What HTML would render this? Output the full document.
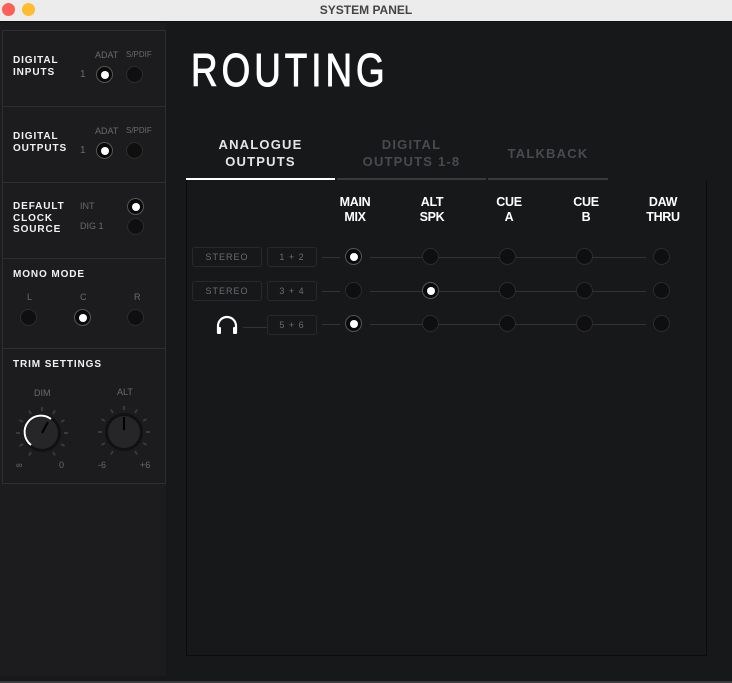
<!DOCTYPE html>
<html><head><meta charset="utf-8">
<style>
*{margin:0;padding:0;box-sizing:border-box}
body{width:732px;height:683px;overflow:hidden;background:#17181a;font-family:"Liberation Sans",sans-serif;position:relative}
.a{position:absolute}
.tb{left:0;top:0;width:732px;height:22px;background:#ececec;border-bottom:1px solid #111}
.tb .t{position:absolute;left:0;right:0;top:3px;text-align:center;font:bold 12px "Liberation Sans",sans-serif;color:#444}
.dot{position:absolute;top:3px;width:13px;height:13px;border-radius:50%}
.side{left:0;top:23px;width:166px;height:653px;background:#1c1c1e}
.box{position:absolute;left:2px;width:164px;border:1px solid #2e2e31;background:#1c1c1e}
.h{position:absolute;color:#f2f2f2;font-weight:bold;font-size:10px;letter-spacing:0.9px;line-height:12px}
.l{position:absolute;color:#6a6a6e;font-size:9px}
.rb{position:absolute;width:17px;height:17px;border-radius:50%;background:#0f0f10;border:1px solid #2c2c2f}
.rb.on::after{content:"";position:absolute;left:3.5px;top:3.5px;width:8px;height:8px;border-radius:50%;background:#fff}
.rb.on{background:#0a0a0b;border-color:#555}
.tab{position:absolute;text-align:center;font-size:13px;letter-spacing:1.2px;line-height:17px;font-weight:bold}
.col{position:absolute;width:60px;text-align:center;color:#fff;font-size:12.5px;font-weight:bold;line-height:15px;letter-spacing:-0.3px}
.pill{position:absolute;height:20px;border:1px solid #29292c;border-radius:3px;color:#6c6c70;font-size:9px;letter-spacing:1px;text-align:center;line-height:18px}
.ln{position:absolute;height:1px;background:#333336}
</style></head><body>
<div class="a tb"><div class="dot" style="left:2px;background:#fe5f57"></div><div class="dot" style="left:22px;background:#febc2e"></div><div class="t">SYSTEM PANEL</div></div>
<div class="a side"></div>
<div class="box" style="top:30px;height:77px"></div>
<div class="box" style="top:106px;height:77px"></div>
<div class="box" style="top:182px;height:77px"></div>
<div class="box" style="top:258px;height:91px"></div>
<div class="box" style="top:348px;height:136px"></div>

<div class="h" style="left:13px;top:55px">DIGITAL<br>INPUTS</div>
<div class="l" style="left:95px;top:50px">ADAT</div><div class="l" style="left:126px;top:50px;font-size:8px">S/PDIF</div>
<div class="l" style="left:80px;top:69px;font-size:10px">1</div>
<div class="rb on" style="left:96px;top:66px"></div><div class="rb" style="left:126px;top:66px"></div>

<div class="h" style="left:13px;top:131px">DIGITAL<br>OUTPUTS</div>
<div class="l" style="left:95px;top:126px">ADAT</div><div class="l" style="left:126px;top:126px;font-size:8px">S/PDIF</div>
<div class="l" style="left:80px;top:145px;font-size:10px">1</div>
<div class="rb on" style="left:96px;top:142px"></div><div class="rb" style="left:126px;top:142px"></div>

<div class="h" style="left:13px;top:201px;line-height:11.5px">DEFAULT<br>CLOCK<br>SOURCE</div>
<div class="l" style="left:80px;top:201px">INT</div><div class="l" style="left:80px;top:221px">DIG 1</div>
<div class="rb on" style="left:127px;top:198px"></div><div class="rb" style="left:127px;top:218px"></div>

<div class="h" style="left:13px;top:269px">MONO MODE</div>
<div class="l" style="left:27px;top:292px">L</div><div class="l" style="left:80px;top:292px">C</div><div class="l" style="left:134px;top:292px">R</div>
<div class="rb" style="left:20px;top:309px"></div><div class="rb on" style="left:74px;top:309px"></div><div class="rb" style="left:127px;top:309px"></div>

<div class="h" style="left:13px;top:359px">TRIM SETTINGS</div>
<div class="l" style="left:34px;top:388px">DIM</div><div class="l" style="left:117px;top:387px">ALT</div>
<svg class="a" style="left:0;top:400px" width="166" height="75">
<g stroke="#3a3a3d" stroke-width="2">
<g transform="translate(42,33)">
<line x1="0" y1="-26" x2="0" y2="-22" transform="rotate(-150)"/><line x1="0" y1="-26" x2="0" y2="-22" transform="rotate(-120)"/><line x1="0" y1="-26" x2="0" y2="-22" transform="rotate(-90)"/><line x1="0" y1="-26" x2="0" y2="-22" transform="rotate(-60)"/><line x1="0" y1="-26" x2="0" y2="-22" transform="rotate(-30)"/><line x1="0" y1="-26" x2="0" y2="-22"/><line x1="0" y1="-26" x2="0" y2="-22" transform="rotate(30)"/><line x1="0" y1="-26" x2="0" y2="-22" transform="rotate(60)"/><line x1="0" y1="-26" x2="0" y2="-22" transform="rotate(90)"/><line x1="0" y1="-26" x2="0" y2="-22" transform="rotate(120)"/><line x1="0" y1="-26" x2="0" y2="-22" transform="rotate(150)"/>
</g>
<g transform="translate(124,32)">
<line x1="0" y1="-26" x2="0" y2="-22" transform="rotate(-150)"/><line x1="0" y1="-26" x2="0" y2="-22" transform="rotate(-120)"/><line x1="0" y1="-26" x2="0" y2="-22" transform="rotate(-90)"/><line x1="0" y1="-26" x2="0" y2="-22" transform="rotate(-60)"/><line x1="0" y1="-26" x2="0" y2="-22" transform="rotate(-30)"/><line x1="0" y1="-26" x2="0" y2="-22"/><line x1="0" y1="-26" x2="0" y2="-22" transform="rotate(30)"/><line x1="0" y1="-26" x2="0" y2="-22" transform="rotate(60)"/><line x1="0" y1="-26" x2="0" y2="-22" transform="rotate(90)"/><line x1="0" y1="-26" x2="0" y2="-22" transform="rotate(120)"/><line x1="0" y1="-26" x2="0" y2="-22" transform="rotate(150)"/>
</g></g>
<circle cx="42" cy="33" r="19" fill="#111112"/><circle cx="42" cy="33" r="16" fill="#262628"/>
<path d="M31,45 A16,16 0 0 1 51,19" fill="none" stroke="#fff" stroke-width="2"/>
<line x1="42" y1="33" x2="48" y2="22" stroke="#000" stroke-width="2"/>
<circle cx="124" cy="32" r="19" fill="#111112"/><circle cx="124" cy="32" r="16" fill="#262628"/>
<line x1="124" y1="30" x2="124" y2="17" stroke="#000" stroke-width="2"/>
</svg>
<div class="l" style="left:16px;top:460px">∞</div><div class="l" style="left:59px;top:460px">0</div>
<div class="l" style="left:98px;top:460px">-6</div><div class="l" style="left:140px;top:460px">+6</div>

<div class="a" style="left:191px;top:40px;color:#fff;font-size:46px;letter-spacing:5px;line-height:60px;transform:scaleX(0.8);transform-origin:0 0;-webkit-text-stroke:1px #fff">ROUTING</div>

<div class="tab" style="left:186px;top:136px;width:149px;color:#e6e6e6">ANALOGUE<br>OUTPUTS</div>
<div class="tab" style="left:337px;top:136px;width:149px;color:#4a4a4e">DIGITAL<br>OUTPUTS 1-8</div>
<div class="tab" style="left:488px;top:145px;width:120px;color:#4a4a4e">TALKBACK</div>
<div class="a" style="left:186px;top:178px;width:149px;height:2px;background:#fff"></div>
<div class="a" style="left:337px;top:178px;width:149px;height:2px;background:#3a3a3d"></div>
<div class="a" style="left:488px;top:178px;width:120px;height:2px;background:#3a3a3d"></div>
<div class="a" style="left:186px;top:180px;width:521px;height:476px;border:1px solid #0c0c0d;border-top:none"></div>

<div class="col" style="left:325px;top:195px">MAIN<br>MIX</div>
<div class="col" style="left:402px;top:195px">ALT<br>SPK</div>
<div class="col" style="left:479px;top:195px">CUE<br>A</div>
<div class="col" style="left:556px;top:195px">CUE<br>B</div>
<div class="col" style="left:633px;top:195px">DAW<br>THRU</div>

<div class="pill" style="left:192px;top:247px;width:70px">STEREO</div>
<div class="pill" style="left:267px;top:247px;width:50px">1 + 2</div>
<div class="pill" style="left:192px;top:281px;width:70px">STEREO</div>
<div class="pill" style="left:267px;top:281px;width:50px">3 + 4</div>
<div class="pill" style="left:267px;top:315px;width:50px">5 + 6</div>
<svg class="a" style="left:215px;top:315px" width="24" height="20"><path d="M3,18 V11 A9,9 0 0 1 21,11 V18" fill="none" stroke="#fff" stroke-width="2.2"/><rect x="2" y="12" width="4" height="7" rx="1" fill="#fff"/><rect x="18" y="12" width="4" height="7" rx="1" fill="#fff"/></svg>
<div class="ln" style="left:243px;top:327px;width:24px"></div>

<div class="ln" style="left:322px;top:257px;width:18px"></div>
<div class="ln" style="left:322px;top:291px;width:18px"></div>
<div class="ln" style="left:322px;top:324px;width:18px"></div>
<div class="ln" style="left:370px;top:257px;width:276px"></div>
<div class="ln" style="left:370px;top:291px;width:276px"></div>
<div class="ln" style="left:370px;top:324px;width:276px"></div>

<div class="rb on" style="left:345px;top:248px"></div><div class="rb" style="left:422px;top:248px"></div><div class="rb" style="left:499px;top:248px"></div><div class="rb" style="left:576px;top:248px"></div><div class="rb" style="left:653px;top:248px"></div>
<div class="rb" style="left:345px;top:282px"></div><div class="rb on" style="left:422px;top:282px"></div><div class="rb" style="left:499px;top:282px"></div><div class="rb" style="left:576px;top:282px"></div><div class="rb" style="left:653px;top:282px"></div>
<div class="rb on" style="left:345px;top:315px"></div><div class="rb" style="left:422px;top:315px"></div><div class="rb" style="left:499px;top:315px"></div><div class="rb" style="left:576px;top:315px"></div><div class="rb" style="left:653px;top:315px"></div>

<div class="a" style="left:0;top:681px;width:732px;height:2px;background:#3a3a3c"></div>
</body></html>
